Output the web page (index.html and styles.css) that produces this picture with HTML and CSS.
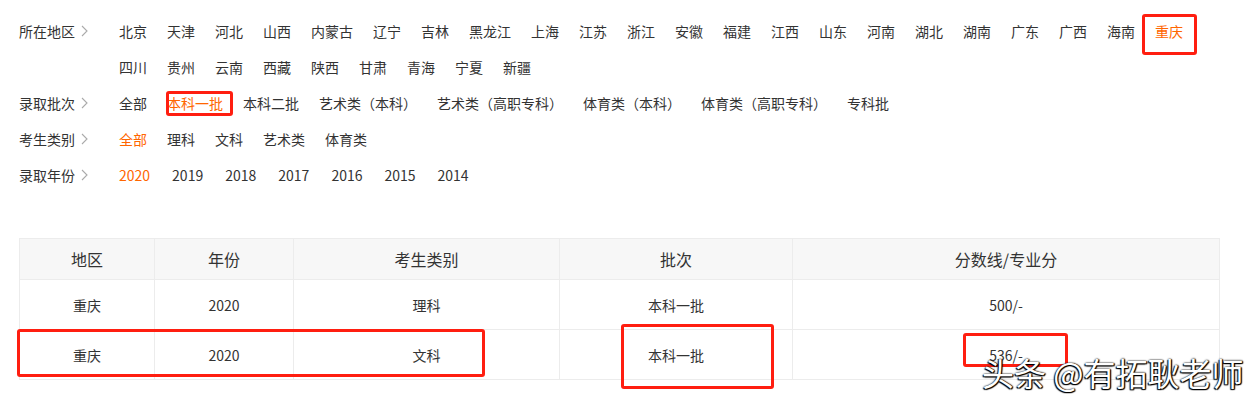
FILE: index.html
```html
<!DOCTYPE html>
<html lang="zh-CN">
<head>
<meta charset="utf-8">
<title>录取分数线</title>
<link rel="stylesheet" href="styles.css">
</head>
<body>
<div class="page">
  <div class="filters">
    <div class="frow">
      <div class="flabel">所在地区<svg class="chev" viewBox="0 0 7 12" width="7" height="12"><polyline points="1,1 6,6 1,11"/></svg></div>
      <div class="fitems">
        <span>北京</span><span>天津</span><span>河北</span><span>山西</span><span>内蒙古</span><span>辽宁</span><span>吉林</span><span>黑龙江</span><span>上海</span><span>江苏</span><span>浙江</span><span>安徽</span><span>福建</span><span>江西</span><span>山东</span><span>河南</span><span>湖北</span><span>湖南</span><span>广东</span><span>广西</span><span>海南</span><span class="on">重庆</span><span>四川</span><span>贵州</span><span>云南</span><span>西藏</span><span>陕西</span><span>甘肃</span><span>青海</span><span>宁夏</span><span>新疆</span>
      </div>
    </div>
    <div class="frow">
      <div class="flabel">录取批次<svg class="chev" viewBox="0 0 7 12" width="7" height="12"><polyline points="1,1 6,6 1,11"/></svg></div>
      <div class="fitems">
        <span>全部</span><span class="on">本科一批</span><span>本科二批</span><span>艺术类（本科）</span><span>艺术类（高职专科）</span><span>体育类（本科）</span><span>体育类（高职专科）</span><span>专科批</span>
      </div>
    </div>
    <div class="frow">
      <div class="flabel">考生类别<svg class="chev" viewBox="0 0 7 12" width="7" height="12"><polyline points="1,1 6,6 1,11"/></svg></div>
      <div class="fitems">
        <span class="on">全部</span><span>理科</span><span>文科</span><span>艺术类</span><span>体育类</span>
      </div>
    </div>
    <div class="frow">
      <div class="flabel">录取年份<svg class="chev" viewBox="0 0 7 12" width="7" height="12"><polyline points="1,1 6,6 1,11"/></svg></div>
      <div class="fitems years">
        <span class="on">2020</span><span>2019</span><span>2018</span><span>2017</span><span>2016</span><span>2015</span><span>2014</span>
      </div>
    </div>
  </div>

  <table class="scores">
    <colgroup>
      <col class="c1"><col class="c2"><col class="c3"><col class="c4"><col class="c5">
    </colgroup>
    <thead>
      <tr><th>地区</th><th>年份</th><th>考生类别</th><th>批次</th><th>分数线/专业分</th></tr>
    </thead>
    <tbody>
      <tr><td>重庆</td><td>2020</td><td>理科</td><td>本科一批</td><td>500/-</td></tr>
      <tr><td>重庆</td><td>2020</td><td>文科</td><td>本科一批</td><td>536/-</td></tr>
    </tbody>
  </table>

  <div class="mark m1"></div>
  <div class="mark m2"></div>
  <div class="mark m3"></div>
  <div class="mark m4"></div>
  <div class="mark m5"></div>
  <div class="watermark">头条 @有拓耿老师</div>
</div>
</body>
</html>
```

FILE: styles.css
```css
html, body {
  margin: 0;
  padding: 0;
  background: #fff;
}
body {
  font-family: "Noto Sans CJK SC", "Noto Sans", sans-serif;
  color: #333;
  font-size: 14px;
}
.page {
  position: relative;
  width: 1255px;
  height: 401px;
  overflow: hidden;
  padding: 13px 0 0 19px;
  box-sizing: border-box;
}
.filters {
  width: 1199px;
}
.frow {
  display: flex;
  align-items: flex-start;
}
.flabel {
  width: 100px;
  flex: none;
  height: 36px;
  line-height: 36px;
  display: flex;
  align-items: center;
  gap: 6px;
  color: #333;
}
.chev {
  fill: none;
  stroke: #aaa;
  stroke-width: 1.1;
}
.fitems {
  flex: 1;
  display: flex;
  flex-wrap: wrap;
  column-gap: 20px;
}
.fitems span {
  height: 36px;
  line-height: 36px;
  white-space: nowrap;
}
.fitems.years {
  column-gap: 22px;
}
.fitems .on {
  color: #ff6600;
}

.scores {
  margin-top: 45px;
  border-collapse: collapse;
  table-layout: fixed;
  width: 1200px;
}
.c1 { width: 135px; }
.c2 { width: 139px; }
.c3 { width: 266px; }
.c4 { width: 233px; }
.c5 { width: 427px; }
.scores th, .scores td {
  border: 1px solid #ececec;
  text-align: center;
  padding: 0;
  font-weight: normal;
}
.scores th {
  background: #f7f7f7;
  height: 40px;
  font-size: 16px;
  color: #333;
}
.scores td {
  height: 49px;
  font-size: 14px;
  color: #333;
}

.mark {
  position: absolute;
  border: 3px solid #ff1e10;
  border-radius: 3px;
  box-sizing: border-box;
}
.m1 { left: 1142px; top: 14px; width: 55px; height: 41px; }
.m2 { left: 166px; top: 91px; width: 67px; height: 25px; }
.m3 { left: 17px; top: 329px; width: 468px; height: 48px; }
.m4 { left: 621px; top: 324px; width: 153px; height: 65px; }
.m5 { left: 963px; top: 333px; width: 105px; height: 34px; }

.watermark {
  position: absolute;
  left: 982px;
  top: 352px;
  font-size: 32px;
  line-height: 40px;
  color: #fff;
  white-space: nowrap;
  text-shadow: 1px 1px 1px #000, -1px 1px 1px #000, 1px 0 1px #222, 0 0 2px #000;
}
```
